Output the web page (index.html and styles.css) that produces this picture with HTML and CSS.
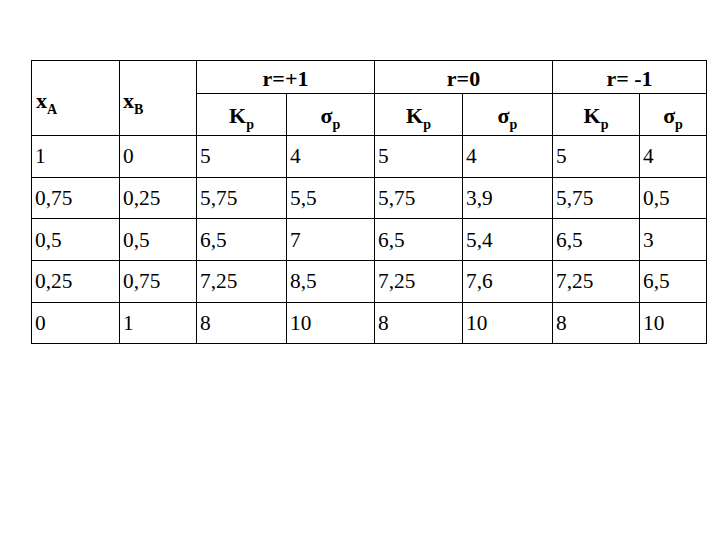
FILE: index.html
```html
<!DOCTYPE html>
<html>
<head>
<meta charset="utf-8">
<link rel="stylesheet" href="styles.css">
</head>
<body>
<table class="grid">
  <colgroup>
    <col class="c1"><col class="c2"><col class="c3"><col class="c4"><col class="c5"><col class="c6"><col class="c7"><col class="c8">
  </colgroup>
  <thead>
    <tr class="h1">
      <th rowspan="2" class="var first">x<sub>A</sub></th>
      <th rowspan="2" class="var">x<sub>B</sub></th>
      <th colspan="2" class="grp">r=+1</th>
      <th colspan="2" class="grp">r=0</th>
      <th colspan="2" class="grp">r= -1</th>
    </tr>
    <tr class="h2">
      <th class="sym">K<sub>p</sub></th>
      <th class="sym">σ<sub>p</sub></th>
      <th class="sym">K<sub>p</sub></th>
      <th class="sym">σ<sub>p</sub></th>
      <th class="sym">K<sub>p</sub></th>
      <th class="sym">σ<sub>p</sub></th>
    </tr>
  </thead>
  <tbody>
    <tr class="row"><td>1</td><td>0</td><td>5</td><td>4</td><td>5</td><td>4</td><td>5</td><td>4</td></tr>
    <tr class="row"><td>0,75</td><td>0,25</td><td>5,75</td><td>5,5</td><td>5,75</td><td>3,9</td><td>5,75</td><td>0,5</td></tr>
    <tr class="row"><td>0,5</td><td>0,5</td><td>6,5</td><td>7</td><td>6,5</td><td>5,4</td><td>6,5</td><td>3</td></tr>
    <tr class="row"><td>0,25</td><td>0,75</td><td>7,25</td><td>8,5</td><td>7,25</td><td>7,6</td><td>7,25</td><td>6,5</td></tr>
    <tr class="row"><td>0</td><td>1</td><td>8</td><td>10</td><td>8</td><td>10</td><td>8</td><td>10</td></tr>
  </tbody>
</table>
</body>
</html>
```
FILE: styles.css
```css
html, body {
  margin: 0;
  padding: 0;
  background: #ffffff;
}
body {
  padding: 60px 0 0 31px;
  font-family: "Liberation Serif", "Times New Roman", serif;
  color: #000000;
}
.grid {
  border-collapse: collapse;
  table-layout: fixed;
  width: 675px;
  font-family: "Liberation Serif", "Times New Roman", serif;
  font-size: 21.33px;
}
.c1 { width: 88px; }
.c2 { width: 77px; }
.c3 { width: 90px; }
.c4 { width: 88px; }
.c5 { width: 88px; }
.c6 { width: 90px; }
.c7 { width: 87px; }
.c8 { width: 67px; }
.grid th, .grid td {
  border: 1px solid #000000;
  padding: 0 0 0 3px;
  line-height: 24px;
}
.grid td {
  text-align: left;
  vertical-align: middle;
  font-weight: normal;
}
.grid .row { height: 41.7px; }
.grid .h1 { height: 33px; }
.grid .h2 { height: 42px; }
.grid th {
  font-weight: bold;
  font-size: 22px;
}
.grid .var {
  text-align: left;
  vertical-align: top;
  padding: 28px 0 0 3px;
}
.grid .first { padding-left: 4px; }
.grid .grp {
  text-align: center;
  vertical-align: top;
  padding: 6px 0 0 0;
}
.grid .sym {
  text-align: center;
  vertical-align: top;
  padding: 10px 0 0 0;
}
.grid sub {
  font-size: 14px;
  vertical-align: -6px;
  line-height: 0;
}
```
